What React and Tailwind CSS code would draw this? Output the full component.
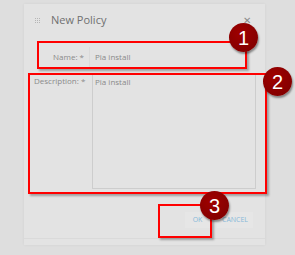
import React from "react";

const Marker = ({ n, className }) => (
  <div
    className={`absolute w-[29px] h-[29px] rounded-full bg-[radial-gradient(circle_at_40%_35%,#a00000,#7a0000)] shadow-[1px_2px_2px_rgba(0,0,0,0.4)] flex items-center justify-center text-white text-[20px] leading-none font-['Liberation_Sans',Arial,sans-serif] ${className}`}
  >
    {n}
  </div>
);

const Grip = () => (
  <div className="grid grid-cols-3 gap-[1px]">
    {Array.from({ length: 9 }).map((_, i) => (
      <span key={i} className="w-[1px] h-[1px] bg-[#b5b5b5]" />
    ))}
  </div>
);

export default function App() {
  return (
    <div className="relative w-[295px] h-[255px] overflow-hidden bg-[#dedede] pl-[24px] pt-[4px] font-['Open_Sans',sans-serif]">
      <div className="w-[241px] h-[241px] bg-[#e3e3e3] flex flex-col shadow-[0_0_3px_rgba(0,0,0,0.06)]">
        <div className="h-[32px] flex items-center pl-[11px] pr-[14px] shrink-0">
          <Grip />
          <span className="ml-[11px] text-[11px] text-[#707070]">New Policy</span>
          <span className="ml-auto text-[10px] leading-none text-[#8a8a8a]">✕</span>
        </div>

        <div className="mt-[10px] h-[22px] flex items-center shrink-0">
          <span className="w-[60px] text-right text-[8px] text-[#8a8a8a]">Name: *</span>
          <div className="ml-[5px] mr-[18px] flex-1 h-[20px] border-l border-[#dadada] flex items-center pl-[5px] text-[8px] text-[#8a8a8a]">
            Pia install
          </div>
        </div>

        <div className="mt-[5px] h-[116px] flex shrink-0">
          <span className="w-[62px] pl-[10px] pt-[2px] text-[8px] leading-[11px] text-[#8a8a8a] whitespace-nowrap">
            Description: *
          </span>
          <div className="ml-[6px] w-[164px] h-full border border-[#cdcdcd] px-[2px] pt-[2px] text-[8px] leading-[11px] text-[#8a8a8a]">
            Pia install
          </div>
        </div>

        <div className="mt-[23px] h-[16px] flex justify-end items-center gap-[7px] pr-[12px] shrink-0">
          <div className="w-[25px] h-full bg-[#e6e6e6] flex items-center justify-center text-[7px] text-[#86b9d9]">
            OK
          </div>
          <div className="w-[36px] h-full bg-[#e6e6e6] flex items-center justify-center text-[7px] text-[#86b9d9]">
            CANCEL
          </div>
        </div>

        <div className="mt-[10px] h-px bg-[#dadada] shrink-0" />
      </div>

      <div className="absolute left-[37px] top-[41px] w-[210px] h-[28px] border-2 border-[#ff0000] shadow-[2px_2px_2px_rgba(0,0,0,0.3)]" />
      <div className="absolute left-[28px] top-[73px] w-[239px] h-[121px] border-2 border-[#ff0000] shadow-[2px_2px_2px_rgba(0,0,0,0.3)]" />
      <div className="absolute left-[158px] top-[204px] w-[54px] h-[34px] border-2 border-[#ff0000] shadow-[2px_2px_2px_rgba(0,0,0,0.3)]" />

      <Marker n="1" className="left-[229px] top-[23px]" />
      <Marker n="2" className="left-[263px] top-[67px]" />
      <Marker n="3" className="left-[200px] top-[191px]" />
    </div>
  );
}
